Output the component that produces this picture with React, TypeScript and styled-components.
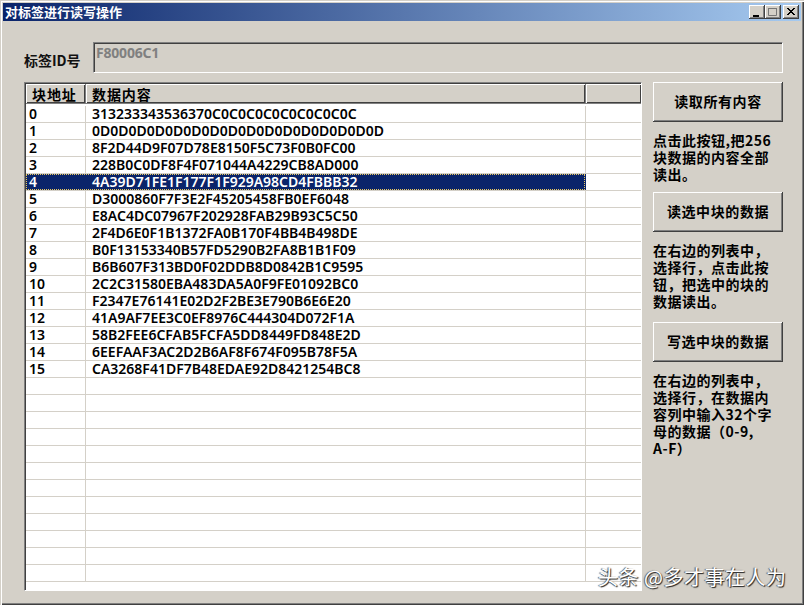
import React from "react";
import styled, { createGlobalStyle } from "styled-components";

const ROW_HEIGHT = 17;

const rows = [
  "313233343536370C0C0C0C0C0C0C0C0C",
  "0D0D0D0D0D0D0D0D0D0D0D0D0D0D0D0D",
  "8F2D44D9F07D78E8150F5C73F0B0FC00",
  "228B0C0DF8F4F071044A4229CB8AD000",
  "4A39D71FE1F177F1F929A98CD4FBBB32",
  "D3000860F7F3E2F45205458FB0EF6048",
  "E8AC4DC07967F202928FAB29B93C5C50",
  "2F4D6E0F1B1372FA0B170F4BB4B498DE",
  "B0F13153340B57FD5290B2FA8B1B1F09",
  "B6B607F313BD0F02DDB8D0842B1C9595",
  "2C2C31580EBA483DA5A0F9FE01092BC0",
  "F2347E76141E02D2F2BE3E790B6E6E20",
  "41A9AF7EE3C0EF8976C444304D072F1A",
  "58B2FEE6CFAB5FCFA5DD8449FD848E2D",
  "6EEFAAF3AC2D2B6AF8F674F095B78F5A",
  "CA3268F41DF7B48EDAE92D8421254BC8",
];

const EMPTY_ROWS = 12;
const SELECTED = 4;

const GlobalStyle = createGlobalStyle`
  html, body {
    margin: 0;
    padding: 0;
    background: #d4d0c8;
  }
`;

const Window = styled.div`
  position: relative;
  box-sizing: border-box;
  width: 804px;
  height: 605px;
  overflow: hidden;
  display: flex;
  flex-direction: column;
  background: #d4d0c8;
  padding: 3px 3px 3px 3px;
  box-shadow:
    inset 1px 1px 0 #d4d0c8,
    inset 2px 2px 0 #ffffff,
    inset -1px -1px 0 #404040,
    inset -2px -2px 0 #808080;
  font-family: "Noto Sans CJK SC", sans-serif;
  color: #000;
`;

const TitleBar = styled.div`
  flex: none;
  height: 18px;
  display: flex;
  align-items: center;
  justify-content: space-between;
  padding: 0 2px 0 2px;
  background: linear-gradient(90deg, #0a246a, #a6caf0);
`;

const TitleText = styled.span`
  color: #fff;
  font-size: 13px;
  font-weight: 700;
  line-height: 18px;
`;

const Controls = styled.div`
  display: flex;
`;

const ControlButton = styled.div<{ $gap?: boolean }>`
  box-sizing: border-box;
  width: 16px;
  height: 14px;
  margin-left: ${(p) => (p.$gap ? "2px" : "0")};
  background: #d4d0c8;
  box-shadow:
    inset -1px -1px 0 #404040,
    inset 1px 1px 0 #ffffff,
    inset -2px -2px 0 #808080;
  display: flex;
  align-items: center;
  justify-content: center;
`;

const Content = styled.div`
  flex: 1;
  display: flex;
  flex-direction: column;
  padding: 21px 18px 0 21px;
`;

const IdRow = styled.div`
  display: flex;
  height: 31px;
  margin-bottom: 9px;
`;

const IdLabel = styled.label`
  width: 69px;
  padding-top: 8px;
  font-size: 14px;
  font-weight: 700;
  line-height: 20px;
  color: #111;
`;

const IdInput = styled.div`
  flex: 1;
  box-sizing: border-box;
  padding: 2px 0 0 2px;
  background: #d4d0c8;
  border-style: solid;
  border-width: 1px;
  border-color: #808080 #ffffff #ffffff #808080;
  box-shadow: inset 1px 1px 0 #404040;
  color: #808080;
  font-family: "Noto Sans", sans-serif;
  font-size: 14px;
  font-weight: 700;
  letter-spacing: -0.2px;
  line-height: 16px;
`;

const Main = styled.div`
  display: flex;
  align-items: flex-start;
`;

const ListView = styled.div`
  box-sizing: border-box;
  width: 618px;
  height: 509px;
  overflow: hidden;
  background: #fff;
  border-style: solid;
  border-width: 1px;
  border-color: #808080 #ffffff #ffffff #808080;
  box-shadow: inset 1px 1px 0 #404040;
  padding: 1px 0 0 1px;
`;

const columns = "60px 500px 56px";

const HeaderRow = styled.div`
  display: grid;
  grid-template-columns: ${columns};
  height: 20px;
`;

const HeaderCell = styled.div`
  box-sizing: border-box;
  padding-left: 6px;
  background: #d4d0c8;
  box-shadow:
    inset -1px -1px 0 #808080,
    inset 1px 1px 0 #ffffff,
    inset -2px -2px 0 #404040;
  font-size: 14px;
  font-weight: 700;
  line-height: 20px;
  letter-spacing: 0.9px;
`;

const Body = styled.div`
  padding-top: 2px;
`;

const Row = styled.div`
  display: grid;
  grid-template-columns: ${columns};
  height: ${ROW_HEIGHT}px;
  box-sizing: border-box;
  border-bottom: 1px solid #d4d0c8;
`;

const Cell = styled.div<{ $selected?: boolean; $first?: boolean }>`
  box-sizing: border-box;
  padding-left: ${(p) => (p.$first ? "3px" : "6px")};
  border-right: 1px solid ${(p) => (p.$selected ? "#0a246a" : "#d4d0c8")};
  background: ${(p) => (p.$selected ? "#0a246a" : "transparent")};
  color: ${(p) => (p.$selected ? "#fff" : "#000")};
  font-family: "Noto Sans", sans-serif;
  font-size: 14px;
  font-weight: 600;
  line-height: 16px;
  white-space: nowrap;
`;

const FocusOutline = styled.div`
  position: absolute;
  left: 0;
  right: 56px;
  top: 0;
  bottom: 0;
  border: 1px dotted #e8c860;
  pointer-events: none;
`;

const SelectedRow = styled(Row)`
  position: relative;
`;

const Side = styled.div`
  width: 130px;
  margin-left: 11px;
  display: flex;
  flex-direction: column;
`;

const PushButton = styled.button`
  flex: none;
  height: 40px;
  padding: 0 0 3px;
  background: #d4d0c8;
  border: none;
  box-shadow:
    inset -1px -1px 0 #404040,
    inset 1px 1px 0 #ffffff,
    inset -2px -2px 0 #808080;
  font-family: "Noto Sans CJK SC", sans-serif;
  font-size: 14px;
  font-weight: 700;
  letter-spacing: 0.6px;
  color: #000;
`;

const Hint = styled.p<{ $height: number }>`
  margin: 0;
  height: ${(p) => p.$height}px;
  padding-top: 10px;
  box-sizing: border-box;
  font-size: 14px;
  font-weight: 700;
  line-height: 17px;
  letter-spacing: 0.5px;
  color: #000;
  white-space: nowrap;
`;

const Watermark = styled.div`
  position: absolute;
  left: 598px;
  top: 563px;
  font-size: 20px;
  letter-spacing: 0.5px;
  line-height: 28px;
  color: #fff;
  text-shadow: 1px 1px 1px #222, -1px 0 1px #555;
  white-space: nowrap;
`;

export default function App() {
  return (
    <>
      <GlobalStyle />
      <Window>
        <TitleBar>
          <TitleText>对标签进行读写操作</TitleText>
          <Controls>
            <ControlButton>
              <svg width="10" height="10" viewBox="0 0 10 10">
                <rect x="1" y="8" width="6" height="2" fill="#000" />
              </svg>
            </ControlButton>
            <ControlButton>
              <svg width="10" height="10" viewBox="0 0 10 10">
                <path d="M0.5 1.5h8v7h-8z" fill="none" stroke="#777" />
                <path d="M0 1.5h9" stroke="#777" />
              </svg>
            </ControlButton>
            <ControlButton $gap>
              <svg width="10" height="10" viewBox="0 0 10 10">
                <path d="M1 1l7 7M2 1l7 7M8 1l-7 7M9 1l-7 7" stroke="#000" />
              </svg>
            </ControlButton>
          </Controls>
        </TitleBar>
        <Content>
          <IdRow>
            <IdLabel>标签ID号</IdLabel>
            <IdInput>F80006C1</IdInput>
          </IdRow>
          <Main>
            <ListView>
              <HeaderRow>
                <HeaderCell>块地址</HeaderCell>
                <HeaderCell>数据内容</HeaderCell>
                <HeaderCell />
              </HeaderRow>
              <Body>
                {rows.map((data, i) =>
                  i === SELECTED ? (
                    <SelectedRow key={i}>
                      <Cell $first $selected>{i}</Cell>
                      <Cell $selected>{data}</Cell>
                      <Cell />
                      <FocusOutline />
                    </SelectedRow>
                  ) : (
                    <Row key={i}>
                      <Cell $first>{i}</Cell>
                      <Cell>{data}</Cell>
                      <Cell />
                    </Row>
                  )
                )}
                {Array.from({ length: EMPTY_ROWS }, (_, i) => (
                  <Row key={`empty-${i}`}>
                    <Cell $first />
                    <Cell />
                    <Cell />
                  </Row>
                ))}
              </Body>
            </ListView>
            <Side>
              <PushButton>读取所有内容</PushButton>
              <Hint $height={70}>
                点击此按钮,把256
                <br />
                块数据的内容全部
                <br />
                读出。
              </Hint>
              <PushButton>读选中块的数据</PushButton>
              <Hint $height={90}>
                在右边的列表中，
                <br />
                选择行，点击此按
                <br />
                钮，把选中的块的
                <br />
                数据读出。
              </Hint>
              <PushButton>写选中块的数据</PushButton>
              <Hint $height={110}>
                在右边的列表中，
                <br />
                选择行，在数据内
                <br />
                容列中输入32个字
                <br />
                母的数据（0-9,
                <br />
                A-F）
              </Hint>
            </Side>
          </Main>
        </Content>
        <Watermark>头条 @多才事在人为</Watermark>
      </Window>
    </>
  );
}
